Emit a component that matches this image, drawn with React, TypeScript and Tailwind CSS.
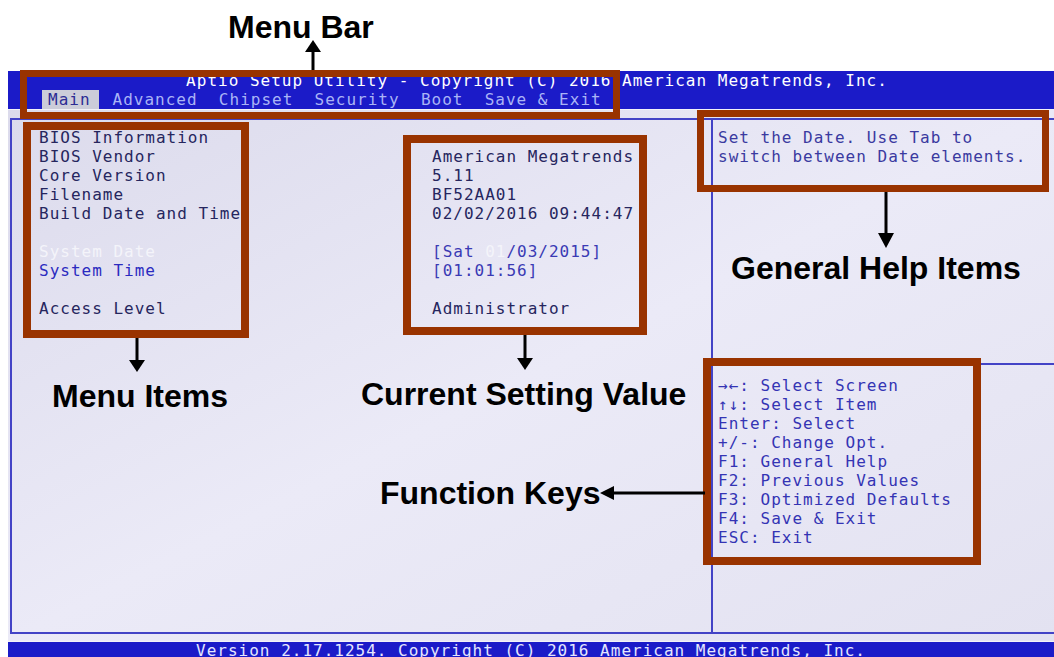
import React from 'react';

const mono = { fontFamily: '"DejaVu Sans Mono", "Liberation Mono", monospace' };
const label = { fontFamily: '"Liberation Sans", Arial, sans-serif' };

const rows: { name: string; value: React.ReactNode; tone?: 'sel' | 'blue' }[] = [
  { name: 'BIOS Information', value: '' },
  { name: 'BIOS Vendor', value: 'American Megatrends' },
  { name: 'Core Version', value: '5.11' },
  { name: 'Filename', value: 'BF52AA01' },
  { name: 'Build Date and Time', value: '02/02/2016 09:44:47' },
  { name: '', value: '' },
  {
    name: 'System Date',
    tone: 'sel',
    value: (
      <span className="text-[#3a3ab4]">
        [Sat <span className="text-[#f4f4fa]">01</span>/03/2015]
      </span>
    ),
  },
  { name: 'System Time', tone: 'blue', value: <span className="text-[#3a3ab4]">[01:01:56]</span> },
  { name: '', value: '' },
  { name: 'Access Level', value: 'Administrator' },
];

const keys = [
  '→←: Select Screen',
  '↑↓: Select Item',
  'Enter: Select',
  '+/-: Change Opt.',
  'F1: General Help',
  'F2: Previous Values',
  'F3: Optimized Defaults',
  'F4: Save & Exit',
  'ESC: Exit',
];

const Box = ({ className }: { className: string }) => (
  <div className={`absolute border-[#993300] ${className}`}></div>
);

const Label = ({ text, className }: { text: string; className: string }) => (
  <div style={label} className={`absolute text-[32px] leading-none font-bold text-black whitespace-nowrap ${className}`}>
    {text}
  </div>
);

const App: React.FC = () => {
  return (
    <div className="relative w-[1054px] h-[657px] overflow-hidden bg-white flex flex-col">
      <div className="h-[71px] shrink-0"></div>

      {/* BIOS screen */}
      <div style={mono} className="ml-[8px] flex flex-col text-[16px] leading-[19px] tracking-[1px]">
        {/* Header */}
        <div className="bg-[#1b1bc8] h-[38px] overflow-hidden">
          <div className="h-[19px] pl-[12px] text-center text-white whitespace-pre">
            Aptio Setup Utility - Copyright (C) 2016 American Megatrends, Inc.
          </div>
          <div className="h-[19px] flex pl-[34px] whitespace-pre">
            <span className="pl-[6px] pr-[8px] bg-[#cccdd9] text-[#2c2c94]">Main</span>
            <span className="ml-[14px] text-[#aab4f6]">Advanced  Chipset  Security  Boot  Save &amp; Exit</span>
          </div>
        </div>
        <div className="h-[1px] bg-[#f2f2f8]"></div>

        {/* Body */}
        <div className="h-[531px] pt-[8px] pb-[7px] pl-[2px] flex bg-linear-to-br from-[#dcdbec] via-[#ebeaf7] to-[#e3e2f1]">
          <div className="flex-1 flex border-2 border-r-0 border-[#4343c6]">
            {/* Left: items + values */}
            <div className="w-[701px] shrink-0 border-r-2 border-[#4343c6] pt-[8px] pl-[27px]">
              {rows.map((r, i) => (
                <div key={i} className="h-[19px] grid grid-cols-[393px_1fr] whitespace-pre">
                  <span
                    className={
                      r.tone === 'sel'
                        ? 'text-[#f4f4fa]'
                        : r.tone === 'blue'
                        ? 'text-[#2b2bc0]'
                        : 'text-[#26265e]'
                    }
                  >
                    {r.name}
                  </span>
                  <span className="text-[#26265e]">{r.value}</span>
                </div>
              ))}
            </div>

            {/* Right: help + keys */}
            <div className="flex-1 flex flex-col">
              <div className="h-[245px] shrink-0 border-b-2 border-[#4343c6] pt-[8px] pl-[5px] text-[#3a3aa0] whitespace-pre">
                <div>Set the Date. Use Tab to</div>
                <div>switch between Date elements.</div>
              </div>
              <div className="flex-1 pt-[11px] pl-[5px] text-[#3434b4] whitespace-pre">
                {keys.map((k) => (
                  <div key={k} className="h-[19px]">{k}</div>
                ))}
              </div>
            </div>
          </div>
        </div>

        {/* Footer */}
        <div className="h-[1px] bg-[#f2f2f8]"></div>
        <div className="bg-[#1b1bc8] h-[16px] overflow-hidden text-center text-[#e4e6ff] whitespace-pre leading-[17px]">
          Version 2.17.1254. Copyright (C) 2016 American Megatrends, Inc.
        </div>
      </div>

      {/* Annotation boxes */}
      <Box className="left-[20px] top-[70px] w-[600px] h-[49px] border-[7px]" />
      <Box className="left-[23px] top-[122px] w-[226px] h-[216px] border-[8px]" />
      <Box className="left-[403px] top-[135px] w-[244px] h-[200px] border-[8px]" />
      <Box className="left-[697px] top-[110px] w-[352px] h-[82px] border-[7px]" />
      <Box className="left-[703px] top-[358px] w-[278px] h-[207px] border-[8px]" />

      {/* Arrows */}
      <svg className="absolute inset-0 pointer-events-none" width="1054" height="657" viewBox="0 0 1054 657">
        <g fill="#000" stroke="#000" strokeWidth="3">
          <line x1="313" y1="70" x2="313" y2="50" />
          <polygon points="305,52 321,52 313,40" stroke="none" />
          <line x1="137" y1="338" x2="137" y2="362" />
          <polygon points="129,360 145,360 137,372" stroke="none" />
          <line x1="525" y1="335" x2="525" y2="360" />
          <polygon points="517,358 533,358 525,370" stroke="none" />
          <line x1="886" y1="192" x2="886" y2="236" />
          <polygon points="878,233 894,233 886,248" stroke="none" />
          <line x1="705" y1="493" x2="610" y2="493" />
          <polygon points="600,493 614,486 614,500" stroke="none" />
        </g>
      </svg>

      {/* Labels */}
      <Label text="Menu Bar" className="left-[228px] top-[11px]" />
      <Label text="General Help Items" className="left-[731px] top-[252px]" />
      <Label text="Menu Items" className="left-[52px] top-[380px]" />
      <Label text="Current Setting Value" className="left-[361px] top-[378px]" />
      <Label text="Function Keys" className="left-[380px] top-[477px]" />
    </div>
  );
};

export default App;
